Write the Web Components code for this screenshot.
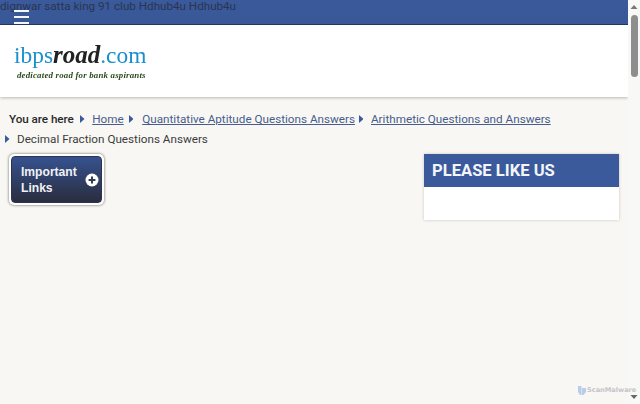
<!DOCTYPE html>
<html>
<head>
<meta charset="utf-8">
<style>
  html, body { margin: 0; height: 404px; overflow: hidden; background: #f8f7f3; }
  body { display: flex; font-family: Roboto, sans-serif; color: #333; }
  page-main { flex: 1; min-width: 0; }
</style>
</head>
<body>
<page-main>
  <top-bar>dignwar satta king 91 club Hdhub4u Hdhub4u</top-bar>
  <logo-header></logo-header>
  <bread-crumbs></bread-crumbs>
  <content-row>
    <links-button slot="left">Important Links</links-button>
    <like-box slot="right">PLEASE LIKE US</like-box>
  </content-row>
</page-main>
<fake-scrollbar></fake-scrollbar>
<scan-badge></scan-badge>

<script>
class TopBar extends HTMLElement {
  constructor() {
    super();
    this.attachShadow({ mode: "open" }).innerHTML = `
      <style>
        :host { display: flex; align-items: flex-start; height: 24px; position: relative;
          background: linear-gradient(#3a5a9c, #375796); border-bottom: 1px solid #22365f; }
        .burger { margin: 10px 0 0 14px; width: 15px; display: grid; gap: 4px; position: relative; z-index: 1; }
        .burger i { display: block; height: 2px; background: #f4f6fa; }
        .ticker { position: absolute; left: 0; top: -1px; font-size: 11.65px; line-height: 14px; color: #2b3550; white-space: nowrap; }
      </style>
      <div class="ticker"><slot></slot></div>
      <div class="burger"><i></i><i></i><i></i></div>`;
  }
}

class LogoHeader extends HTMLElement {
  constructor() {
    super();
    this.attachShadow({ mode: "open" }).innerHTML = `
      <style>
        :host { display: block; height: 72px; background: #fff; box-shadow: 0 1px 3px rgba(0,0,0,.25); padding: 0 0 0 14px; }
        .brand { filter: blur(.3px); }
        .logo { padding-top: 15px; font-family: "Liberation Serif", serif; font-size: 23.4px; line-height: 30px; color: #1a8ecf; white-space: nowrap; }
        .logo b { color: #222; font-style: italic; font-size: 25px; }
        .tag { margin: -1px 0 0 3px; font-family: "Liberation Serif", serif; font-weight: bold; font-style: italic;
          font-size: 8.9px; line-height: 12px; color: #2c4a1c; white-space: nowrap; letter-spacing: .18px; }
      </style>
      <div class="brand">
        <div class="logo">ibps<b>road</b>.com</div>
        <div class="tag">dedicated road for bank aspirants</div>
      </div>`;
  }
}

class BreadCrumbs extends HTMLElement {
  constructor() {
    super();
    const arrow = (before, after) => `<svg style="margin:0 ${after}px 0 ${before}px" width="4.5" height="8" viewBox="0 0 5 8" preserveAspectRatio="none"><path d="M0 0l5 4-5 4z" fill="#3a5a9c"/></svg>`;
    this.attachShadow({ mode: "open" }).innerHTML = `
      <style>
        :host { display: block; padding: 12px 0 0 5px; font-size: 11.7px; line-height: 20px; color: #3c3c3c; }
        .row { display: flex; align-items: center; white-space: nowrap; height: 20px; }
        b { font-weight: 500; margin-left: 4px; color: #2a2a2a; letter-spacing: -.05px; }
        a { color: #475d8e; text-decoration: underline; }
        svg { flex: none; }
      </style>
      <div class="row">
        <b>You are here</b>${arrow(6.5, 7.5)}
        <a href="#">Home</a>${arrow(5, 9)}
        <a href="#">Quantitative Aptitude Questions Answers</a>${arrow(3.5, 8)}
        <a href="#">Arithmetic Questions and Answers</a>
      </div>
      <div class="row">${arrow(0, 7.5)}<span>Decimal Fraction Questions Answers</span></div>`;
  }
}

class ContentRow extends HTMLElement {
  constructor() {
    super();
    this.attachShadow({ mode: "open" }).innerHTML = `
      <style>
        :host { display: flex; justify-content: space-between; align-items: flex-start; padding: 5px 9px 0 9px; }
      </style>
      <slot name="left"></slot><slot name="right"></slot>`;
  }
}

class LinksButton extends HTMLElement {
  constructor() {
    super();
    this.attachShadow({ mode: "open" }).innerHTML = `
      <style>
        :host { display: block; width: 95px; box-sizing: border-box; padding: 2px; background: #fff;
          border-radius: 5px; box-shadow: 0 0 3px rgba(0,0,0,.6); }
        .btn { display: flex; align-items: center; justify-content: space-between; height: 45px; padding: 0 2px 0 9px;
          border: 1px solid #2a3350; border-radius: 4px; background: linear-gradient(#36528f, #2a2d3e); color: #fff; }
        .txt { font-family: "Liberation Sans", sans-serif; font-weight: bold; font-size: 12.1px; line-height: 16px; width: 60px; color: #f1f2f5; }
        svg { flex: none; }
      </style>
      <div class="btn">
        <div class="txt"><slot></slot></div>
        <svg width="14" height="14" viewBox="0 0 14 14"><circle cx="7" cy="7" r="6.5" fill="#fff"/><path d="M7 3.6v6.8M3.6 7h6.8" stroke="#2f3a5c" stroke-width="2"/></svg>
      </div>`;
  }
}

class LikeBox extends HTMLElement {
  constructor() {
    super();
    this.attachShadow({ mode: "open" }).innerHTML = `
      <style>
        :host { display: block; width: 195px; background: #fff; box-shadow: 0 0 3px rgba(0,0,0,.2); }
        h2 { margin: 0; height: 33px; padding-left: 8px; background: #3a5a9c; color: #f4f5f8; font-size: 16.6px; font-weight: 700; line-height: 33px; white-space: nowrap; }
        .body { height: 33px; }
      </style>
      <h2><slot></slot></h2>
      <div class="body"></div>`;
  }
}

class FakeScrollbar extends HTMLElement {
  constructor() {
    super();
    this.attachShadow({ mode: "open" }).innerHTML = `
      <style>
        :host { display: flex; flex-direction: column; align-items: center; flex: none; width: 12px; height: 404px; background: #f8f8f6; }
        svg { flex: none; }
        .thumb { width: 7px; height: 62px; margin-top: 5px; border-radius: 4px; background: #8e8e8e; }
        .gap { flex: 1; }
      </style>
      <svg width="8" height="10" viewBox="0 0 8 10"><path d="M4 5l3.5 4h-7z" fill="#777"/></svg>
      <div class="thumb"></div>
      <div class="gap"></div>
      <svg width="8" height="10" viewBox="0 0 8 10"><path d="M4 5L.5 1h7z" fill="#666"/></svg>`;
  }
}

class ScanBadge extends HTMLElement {
  constructor() {
    super();
    this.attachShadow({ mode: "open" }).innerHTML = `
      <style>
        :host { position: absolute; left: 578px; top: 385px; display: flex; align-items: center; gap: 1px; font-family: "DejaVu Sans", sans-serif;
          font-size: 6.6px; font-weight: bold; line-height: 10px; color: #c3c6c9; white-space: nowrap; }
      </style>
      <svg width="8" height="9" viewBox="0 0 8 9"><path d="M0 0h3.5v9H2L0 6zM4 2h4v4L5.5 9H4z" fill="#b9cdea"/></svg>
      <span>ScanMalware</span>`;
  }
}

customElements.define("top-bar", TopBar);
customElements.define("logo-header", LogoHeader);
customElements.define("bread-crumbs", BreadCrumbs);
customElements.define("content-row", ContentRow);
customElements.define("links-button", LinksButton);
customElements.define("like-box", LikeBox);
customElements.define("fake-scrollbar", FakeScrollbar);
customElements.define("scan-badge", ScanBadge);
</script>
</body>
</html>
